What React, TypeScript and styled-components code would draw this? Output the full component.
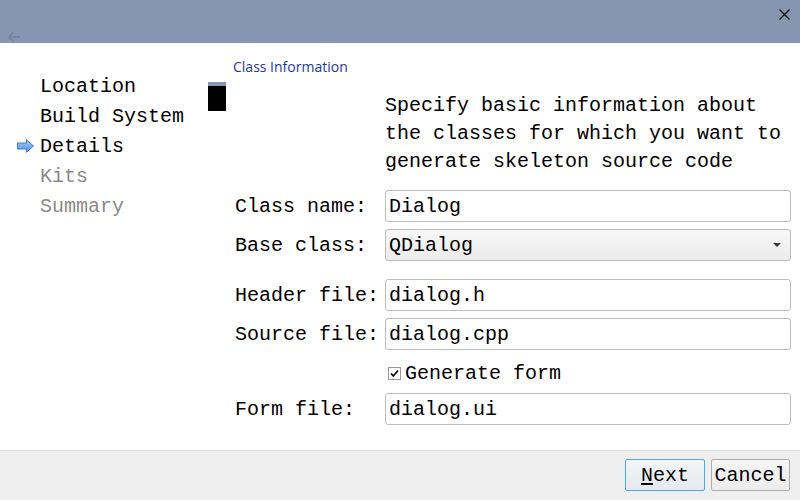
import React from "react";
import styled, { createGlobalStyle } from "styled-components";

const Global = createGlobalStyle`
  html, body { margin: 0; padding: 0; }
  body { width: 800px; height: 500px; overflow: hidden; background: #fff; }
  * { box-sizing: border-box; }
  svg { display: block; }
`;

const mono = `"Liberation Mono", "Courier New", monospace`;

const Window = styled.div`
  width: 800px;
  height: 500px;
  display: flex;
  flex-direction: column;
  font-family: ${mono};
  font-size: 20px;
  color: #000;
`;

const TitleBar = styled.div`
  height: 43px;
  background: #8796b0;
  position: relative;
  flex: none;
`;

const BackIcon = styled.div`
  position: absolute;
  left: 7px;
  top: 31px;
  width: 14px;
  height: 12px;
`;

const CloseIcon = styled.div`
  position: absolute;
  right: 9px;
  top: 8px;
  width: 13px;
  height: 13px;
`;

const Body = styled.div`
  flex: 1;
  display: flex;
  background: #fff;
`;

const Nav = styled.div`
  width: 208px;
  flex: none;
  padding: 28px 0 0 17px;
  display: flex;
  flex-direction: column;
`;

const NavItem = styled.div<{ $dim?: boolean }>`
  height: 30px;
  display: flex;
  align-items: center;
  color: ${(p) => (p.$dim ? "#8a8a8a" : "#000")};
  white-space: nowrap;
`;

const Marker = styled.span`
  width: 23px;
  flex: none;
  display: flex;
  align-items: center;
`;

const SideBlock = styled.div`
  width: 18px;
  height: 29px;
  margin-top: 39px;
  flex: none;
  background: #000;
  border-top: 4px solid #8796b0;
`;

const Content = styled.div`
  flex: 1;
  padding: 14px 9px 0 7px;
  display: flex;
  flex-direction: column;
`;

const PageTitle = styled.div`
  font-family: "Open Sans", "Noto Sans", sans-serif;
  font-size: 14px;
  color: #24389c;
  height: 20px;
  line-height: 20px;
`;

const Description = styled.div`
  margin: 15px 0 0 152px;
  line-height: 28px;
  white-space: nowrap;
`;

const Form = styled.div`
  margin-top: 14px;
  display: grid;
  grid-template-columns: 152px 1fr;
  row-gap: 7px;
  align-items: center;
`;

const Label = styled.div<{ $gapAfter?: number }>`
  padding-left: 2px;
  white-space: nowrap;
  margin-bottom: ${(p) => p.$gapAfter || 0}px;
`;

const Field = styled.div<{ $gapAfter?: number }>`
  height: 32px;
  border: 1px solid #bcbcbc;
  border-radius: 3px;
  background: #fff;
  padding-left: 3px;
  display: flex;
  align-items: center;
  margin-bottom: ${(p) => p.$gapAfter || 0}px;
`;

const Combo = styled(Field)`
  background: linear-gradient(#f7f7f7, #ececec);
  justify-content: space-between;
  padding-right: 9px;
`;

const ComboArrow = styled.span`
  width: 0;
  height: 0;
  border-left: 4px solid transparent;
  border-right: 4px solid transparent;
  border-top: 4px solid #3a3a3a;
`;

const CheckRow = styled.label`
  grid-column: 2;
  height: 29px;
  display: flex;
  align-items: center;
  gap: 4px;
  padding-left: 3px;
  padding-top: 3px;
`;

const CheckBox = styled.span`
  width: 13px;
  height: 13px;
  border: 1px solid #9a9a9a;
  background: #fff;
  display: flex;
  align-items: center;
  justify-content: center;
`;

const Footer = styled.div`
  height: 50px;
  flex: none;
  background: #efefef;
  border-top: 1px solid #dcdcdc;
  display: flex;
  justify-content: flex-end;
  align-items: flex-start;
  padding: 8px 10px 0 0;
  gap: 6px;
`;

const Button = styled.button<{ $primary?: boolean }>`
  height: 32px;
  width: ${(p) => (p.$primary ? 80 : 79)}px;
  font-family: ${mono};
  font-size: 20px;
  color: #000;
  padding: 0;
  border-radius: 2px;
  border: 1px solid ${(p) => (p.$primary ? "#52a5ea" : "#adadad")};
  background: ${(p) =>
    p.$primary ? "linear-gradient(#f3f6fa, #e4eaf1)" : "linear-gradient(#f6f6f6, #ececec)"};
`;

const Mnemonic = styled.span`
  text-decoration: underline;
  text-underline-offset: 2px;
`;

const Arrow = () => (
  <svg width="18" height="14" viewBox="0 0 18 14">
    <defs>
      <linearGradient id="ag" x1="0" y1="0" x2="0" y2="1">
        <stop offset="0" stopColor="#a9cdf3" />
        <stop offset="1" stopColor="#4c8fdc" />
      </linearGradient>
    </defs>
    <polygon points="0.5,4 9.5,4 9.5,0.8 16.5,7 9.5,13.2 9.5,10 0.5,10" fill="url(#ag)" stroke="#3f7cc6" strokeWidth="1" />
  </svg>
);

export default function App() {
  return (
    <>
      <Global />
      <Window>
        <TitleBar>
          <BackIcon>
            <svg width="14" height="12" viewBox="0 0 14 12">
              <path d="M13 6H2M6.5 1.5L2 6l4.5 4.5" stroke="#76819a" strokeWidth="1.6" fill="none" />
            </svg>
          </BackIcon>
          <CloseIcon>
            <svg width="13" height="13" viewBox="0 0 13 13">
              <path d="M1.5 1.5l10 10M11.5 1.5l-10 10" stroke="#111" strokeWidth="1.3" />
            </svg>
          </CloseIcon>
        </TitleBar>
        <Body>
          <Nav>
            <NavItem><Marker />Location</NavItem>
            <NavItem><Marker />Build System</NavItem>
            <NavItem><Marker><Arrow /></Marker>Details</NavItem>
            <NavItem $dim><Marker />Kits</NavItem>
            <NavItem $dim><Marker />Summary</NavItem>
          </Nav>
          <SideBlock />
          <Content>
            <PageTitle>Class Information</PageTitle>
            <Description>
              Specify basic information about
              <br />
              the classes for which you want to
              <br />
              generate skeleton source code
            </Description>
            <Form>
              <Label>Class name:</Label>
              <Field>Dialog</Field>
              <Label $gapAfter={11}>Base class:</Label>
              <Combo $gapAfter={11}>
                QDialog
                <ComboArrow />
              </Combo>
              <Label>Header file:</Label>
              <Field>dialog.h</Field>
              <Label>Source file:</Label>
              <Field>dialog.cpp</Field>
              <CheckRow>
                <CheckBox>
                  <svg width="9" height="9" viewBox="0 0 9 9">
                    <path d="M1 4.5l2.3 2.5L8 1.5" stroke="#000" strokeWidth="1.6" fill="none" />
                  </svg>
                </CheckBox>
                Generate form
              </CheckRow>
              <Label>Form file:</Label>
              <Field>dialog.ui</Field>
            </Form>
          </Content>
        </Body>
        <Footer>
          <Button $primary>
            <Mnemonic>N</Mnemonic>ext
          </Button>
          <Button>Cancel</Button>
        </Footer>
      </Window>
    </>
  );
}
